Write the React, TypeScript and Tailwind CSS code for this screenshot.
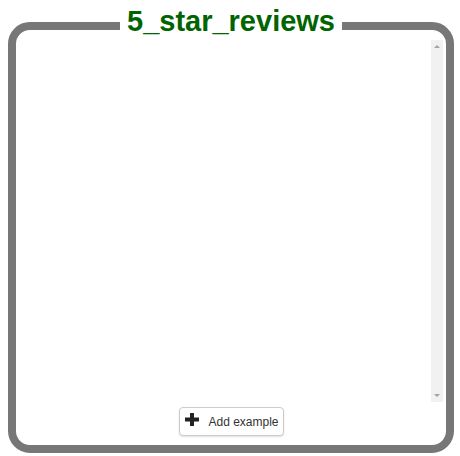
import React from 'react';

function PlusIcon() {
  return (
    <svg width="14" height="13" viewBox="0 0 14 13" className="shrink-0 -mt-[4px]">
      <rect x="5" y="0" width="4" height="13" fill="#222" />
      <rect x="0" y="4.5" width="14" height="4" fill="#222" />
    </svg>
  );
}

export default function App() {
  return (
    <div className="w-[460px] h-[456px] bg-white pt-[7px]" style={{ fontFamily: '"Liberation Sans", Arial, sans-serif' }}>
      {/* card with title sitting in the border */}
      <fieldset className="ml-[8px] w-[446px] h-[446px] border-8 border-[#777] rounded-[22px] p-0 flex flex-col">
        <legend className="mx-auto px-[7px] pb-[8px] text-[29px] leading-none font-bold text-[#006400]">
          5_star_reviews
        </legend>

        <div className="-mt-[4px] h-[362px] flex">
          <div className="flex-1" />
          {/* scrollbar */}
          <div className="w-[12px] mr-[3px] bg-[#f1f1f1] flex flex-col items-center justify-between py-[5px]">
            <div className="w-0 h-0 border-l-[3px] border-r-[3px] border-b-[3px] border-l-transparent border-r-transparent border-b-[#a3a3a3]" />
            <div className="w-0 h-0 border-l-[3px] border-r-[3px] border-t-[3px] border-l-transparent border-r-transparent border-t-[#a3a3a3]" />
          </div>
        </div>

        <button className="mt-[5px] mx-auto w-[105px] h-[29px] flex items-center pl-[5px] border border-[#ccc] rounded-[4px] bg-white shadow-[0_1px_2px_rgba(0,0,0,0.12)]">
          <PlusIcon />
          <span className="ml-[10px] text-[12px] text-[#333]">Add example</span>
        </button>
      </fieldset>
    </div>
  );
}
